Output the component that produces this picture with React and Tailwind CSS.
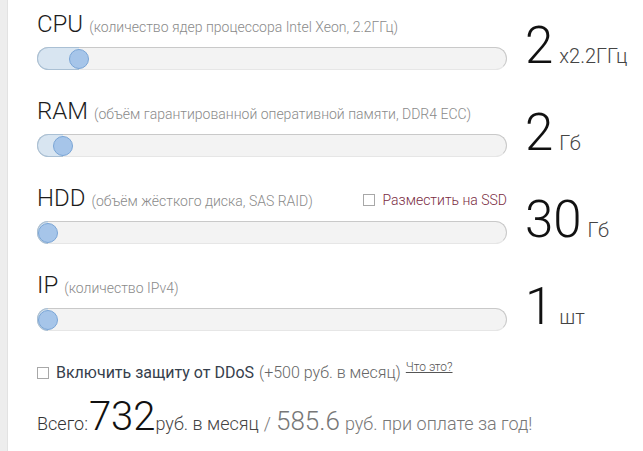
const rows = [
  {
    label: "CPU",
    hint: "(количество ядер процессора Intel Xeon, 2.2ГГц)",
    pos: 42,
    value: "2",
    unit: "x2.2ГГц",
  },
  {
    label: "RAM",
    hint: "(объём гарантированной оперативной памяти, DDR4 ECC)",
    pos: 26,
    value: "2",
    unit: "Гб",
  },
  {
    label: "HDD",
    hint: "(объём жёсткого диска, SAS RAID)",
    pos: 11,
    value: "30",
    unit: "Гб",
    ssd: true,
  },
  {
    label: "IP",
    hint: "(количество IPv4)",
    pos: 11,
    value: "1",
    unit: "шт",
  },
];

function Slider({ pos }) {
  return (
    <div className="relative h-[23px] w-[470px] rounded-full border border-[#c9c9c9] border-b-[#e6e6e6] bg-[#f3f3f3]">
      <div
        className="absolute left-[-1px] top-[-1px] bottom-[-1px] rounded-l-full border border-r-0 border-[#aac0d4] bg-[#d8e5f1]"
        style={{ width: pos }}
      />
      <div
        className="absolute top-[1px] h-[20px] w-[20px] -translate-x-1/2 rounded-full border border-[#7aa5d6] bg-[#a6c5e9]"
        style={{ left: pos - 1 }}
      />
    </div>
  );
}

function Checkbox() {
  return <span className="inline-block h-[12px] w-[12px] shrink-0 border border-[#a8a8a8] bg-white" />;
}

export default function App() {
  return (
    <div className="flex h-[451px] w-[643px] overflow-hidden bg-white font-['Roboto','Liberation_Sans',sans-serif]">
      <div className="w-[8px] shrink-0 border-r border-[#e2e2e2] bg-[#ededed]" />

      <div className="flex flex-col pl-[29px] pt-[10px]">
        {rows.map((row) => (
          <div key={row.label} className="mb-[27px] flex items-end">
            <div className="w-[470px]">
              <div className="flex h-[28px] items-baseline">
                <span className="text-[24px] font-light leading-[28px] text-[#1c1c1c]">{row.label}</span>
                <span className="ml-[6px] text-[14px] font-light text-[#8a8a8a]">{row.hint}</span>
                {row.ssd && (
                  <span className="ml-auto flex items-center gap-[8px] text-[14px] font-light text-[#7a2c3f]">
                    <Checkbox />
                    Разместить на SSD
                  </span>
                )}
              </div>
              <div className="mt-[9px]">
                <Slider pos={row.pos} />
              </div>
            </div>
            <div className="mb-[-1px] ml-[18px] flex items-baseline">
              <span className="text-[51px] font-light leading-[36px] text-[#111]">{row.value}</span>
              <span className="ml-[6px] text-[20px] font-light text-[#444]">{row.unit}</span>
            </div>
          </div>
        ))}

        <div className="mt-[3px] flex items-center text-[16px]">
          <Checkbox />
          <span className="ml-[7px] text-[#36404c]">Включить защиту от DDoS</span>
          <span className="ml-[5px] font-light text-[#666]">(+500 руб. в месяц)</span>
          <span className="ml-[5px] mt-[-12px] text-[12px] font-light text-[#555] underline">Что это?</span>
        </div>

        <div className="mt-[10px] flex items-baseline font-light">
          <span className="text-[18px] text-[#333]">Всего:</span>
          <span className="ml-[1px] text-[40px] leading-[44px] text-[#111]">732</span>
          <span className="text-[18px] text-[#444]">руб. в месяц</span>
          <span className="ml-[5px] text-[18px] text-[#777]">/</span>
          <span className="ml-[5px] text-[26px] text-[#777]">585.6</span>
          <span className="ml-[5px] text-[18px] text-[#777]">руб. при оплате за год!</span>
        </div>
      </div>
    </div>
  );
}
